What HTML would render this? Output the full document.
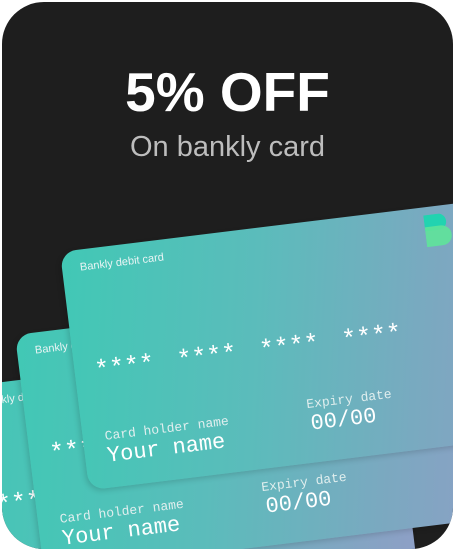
<!DOCTYPE html>
<html><head><style>
html,body{margin:0;padding:0;background:#fff;width:453px;height:551px;overflow:hidden}
.wrap{position:absolute;left:2px;top:2px;width:451px;height:547px;background:#1e1e1e;border-radius:42px;overflow:hidden}
.t1{position:absolute;left:0;width:451px;top:58px;text-align:center;color:#fff;font:bold 55px "Liberation Sans",sans-serif;letter-spacing:0px}
.t2{position:absolute;left:0;width:451px;top:129px;text-align:center;color:#bdbdbd;font:29px "Liberation Sans",sans-serif}
.card{position:absolute;width:430px;height:240px;border-radius:16px;transform:rotate(-7deg);transform-origin:0 0;
background:linear-gradient(100deg,#41c8b5 0%,#5bbcbb 40%,#7aa9c0 75%,#8e9fc6 100%);color:#eef;overflow:hidden;box-shadow:-2px 2px 6px rgba(0,0,0,.15)}
.lbl{position:absolute;left:18px;top:12px;font:11px "Liberation Sans",sans-serif;color:#e8f4f4}
.stars{position:absolute;left:20px;top:108px;font:25px "Liberation Mono",monospace;color:#fff;word-spacing:8px;white-space:pre}
.chn{position:absolute;left:22px;top:181px;font:13px "Liberation Mono",monospace;color:#e0eeee}
.yn{position:absolute;left:22px;top:196px;font:22px "Liberation Mono",monospace;color:#fff}
.ed{position:absolute;left:226px;top:174px;font:13px "Liberation Mono",monospace;color:#e0eeee}
.ex{position:absolute;left:228px;top:189px;font:22px "Liberation Mono",monospace;color:#fff}
.logo{position:absolute;left:365px;top:8px;width:26px;height:32px}
</style></head><body>
<div class="wrap">
<div class="t1">5% OFF</div>
<div class="t2">On bankly card</div>
<div class="card" style="left:-40px;top:385px"><div class="lbl">Bankly debit card</div><div class="stars">**** ****</div></div>
<div class="card" style="left:13px;top:333px;width:462px"><div class="lbl">Bankly debit card</div><div class="stars">**** **** **** ****</div><div class="chn">Card holder name</div><div class="yn">Your name</div><div class="ed">Expiry date</div><div class="ex">00/00</div></div>
<div class="card" style="left:58px;top:250px;width:460px"><div class="lbl">Bankly debit card</div><div class="stars">**** **** **** ****</div><div class="chn">Card holder name</div><div class="yn">Your name</div><div class="ed">Expiry date</div><div class="ex">00/00</div>
<svg class="logo" viewBox="0 0 26 32"><path d="M0 0h14a8 8 0 0 1 0 16H0z" fill="#22d3b0"/><path d="M0 12h16a10 10 0 0 1 0 20H0z" fill="#5fe39a" opacity=".9"/></svg></div>
</div>
</body></html>
